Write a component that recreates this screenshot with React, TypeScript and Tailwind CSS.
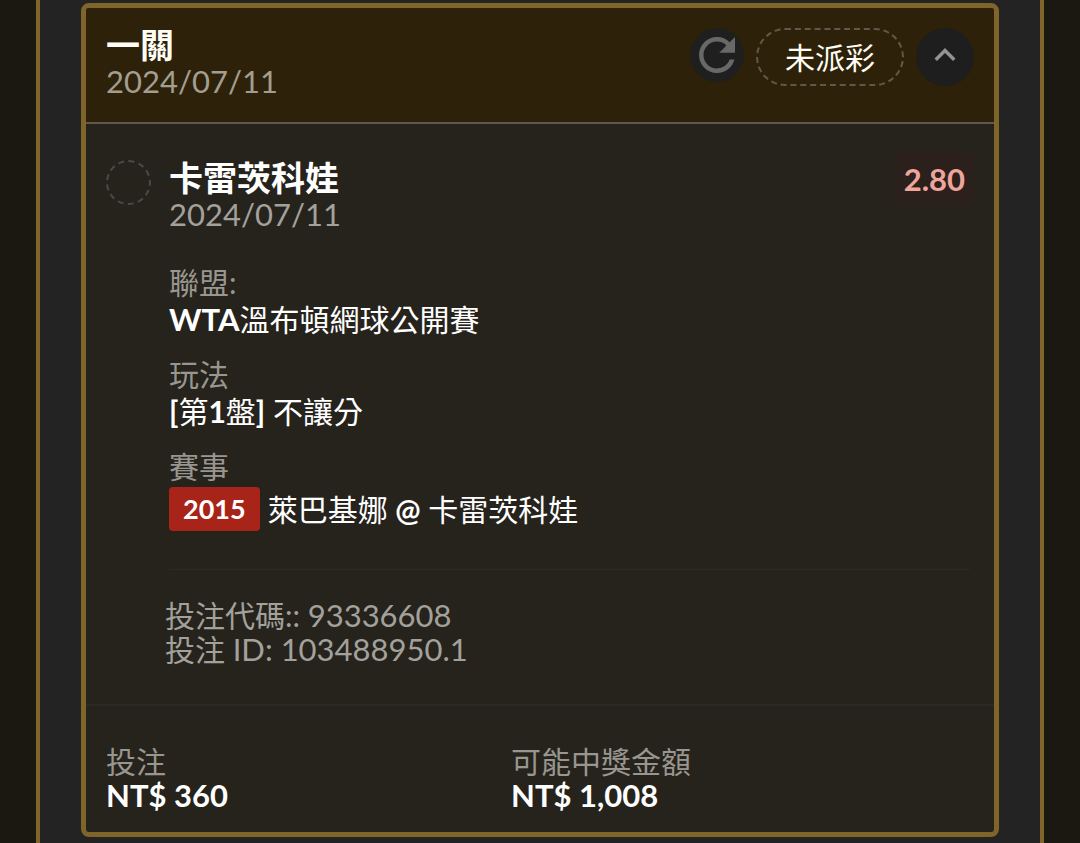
import React from 'react';

const details = [
  { label: '聯盟:', value: <><b className="text-[31px]">WTA</b>溫布頓網球公開賽</> },
  { label: '玩法', value: <><b>[</b>第<b>1</b>盤<b>]</b> 不讓分</> },
];

function RefreshIcon() {
  return (
    <svg viewBox="0 0 24 24" className="h-[54px] w-[54px]" fill="currentColor" aria-hidden="true">
      <path d="M17.65 6.35A7.958 7.958 0 0 0 12 4c-4.42 0-7.99 3.58-7.99 8s3.57 8 7.99 8c3.73 0 6.84-2.55 7.73-6h-2.08A5.99 5.99 0 0 1 12 18c-3.31 0-6-2.69-6-6s2.69-6 6-6c1.66 0 3.14.69 4.22 1.78L13 11h7V4z" />
    </svg>
  );
}

function CollapseIcon() {
  return (
    <svg viewBox="0 0 24 24" className="h-[42px] w-[42px]" fill="currentColor" aria-hidden="true">
      <path d="M12 8l-6 6 1.41 1.41L12 10.83l4.59 4.58L18 14z" />
    </svg>
  );
}

function Header() {
  return (
    <header className="flex items-start justify-between border-b-2 border-[#5f5a4c] bg-[#2d2209] px-5 pt-[18px] pb-[22px]">
      <div>
        <h1 className="text-[34px] leading-[37px] font-bold text-[#fffdf5]">一關</h1>
        <p className="text-[31px] leading-[37px] text-[#a39e90]">2024/07/11</p>
      </div>

      <div className="mt-0.5 flex items-start gap-3">
        <button type="button" aria-label="重新整理" className="flex h-[54px] w-[54px] items-center justify-center rounded-full bg-[#1f1f1f] text-[#686868]">
          <RefreshIcon />
        </button>
        <span className="flex h-[58px] w-[148px] items-center justify-center rounded-full border-2 border-dashed border-[#5f594b] text-[30px] text-[#fffdf5]">
          未派彩
        </span>
        <button type="button" aria-label="收合" className="flex h-[58px] w-[58px] items-center justify-center rounded-full bg-[#1e1e1e] pb-1 text-[#949494]">
          <CollapseIcon />
        </button>
      </div>
    </header>
  );
}

function Selection() {
  return (
    <section className="flex gap-[18px] px-5 pt-9 pb-[38px]">
      <div className="h-[45px] w-[45px] shrink-0 rounded-full border-2 border-dashed border-[#4b4944]"></div>

      <div className="min-w-0 flex-1">
        <div className="flex items-start justify-between">
          <div>
            <h2 className="text-[34px] leading-9 font-bold text-white">卡雷茨科娃</h2>
            <p className="text-[31px] leading-9 text-[#a3a19c]">2024/07/11</p>
          </div>
          <span className="-mt-2 bg-[#2b201b] px-[9px] text-[31px] leading-[54px] font-bold text-[#eea69c]">2.80</span>
        </div>

        <dl className="mt-8 text-[30px] leading-[37px] text-white">
          {details.map((item) => (
            <div key={item.label} className="mb-[18px]">
              <dt className="text-[#98968f]">{item.label}</dt>
              <dd>{item.value}</dd>
            </div>
          ))}
          <div>
            <dt className="text-[#98968f]">賽事</dt>
            <dd className="mt-0.5 flex items-center gap-2">
              <span className="rounded-sm bg-[#a82419] px-3.5 text-[27px] leading-11 font-bold">2015</span>
              <span>萊巴基娜 <b>@</b> 卡雷茨科娃</span>
            </dd>
          </div>
        </dl>

        <hr className="mt-[38px] mr-1 border-[#2c2a24]" />

        <div className="mt-7 -ml-1 text-[30px] leading-[34px] text-[#a3a19c]">
          <p>投注代碼:: <span className="text-[31px]">93336608</span></p>
          <p>投注 <span className="text-[31px]">ID: 103488950.1</span></p>
        </div>
      </div>
    </section>
  );
}

export default function App() {
  return (
    <div className="min-h-screen bg-[#1b1811] px-9 font-['Lato','Noto_Sans_CJK_TC',sans-serif]">
      <main className="min-h-screen border-x-4 border-[#7f6529] bg-[#232324] px-[41px] pt-[3px] pb-1.5">
        <article className="overflow-hidden rounded-lg border-5 border-[#7f6529] bg-[#26231d]">
          <Header />
          <Selection />

          <footer className="grid grid-cols-[405fr_463fr] border-t-2 border-[#2a2822] px-5 pt-[38px] pb-5">
            <div>
              <p className="text-[30px] leading-[34px] text-[#98968f]">投注</p>
              <p className="text-[31px] leading-[34px] font-bold text-white">NT$ 360</p>
            </div>
            <div>
              <p className="text-[30px] leading-[34px] text-[#98968f]">可能中獎金額</p>
              <p className="text-[31px] leading-[34px] font-bold text-white">NT$ 1,008</p>
            </div>
          </footer>
        </article>
      </main>
    </div>
  );
}
